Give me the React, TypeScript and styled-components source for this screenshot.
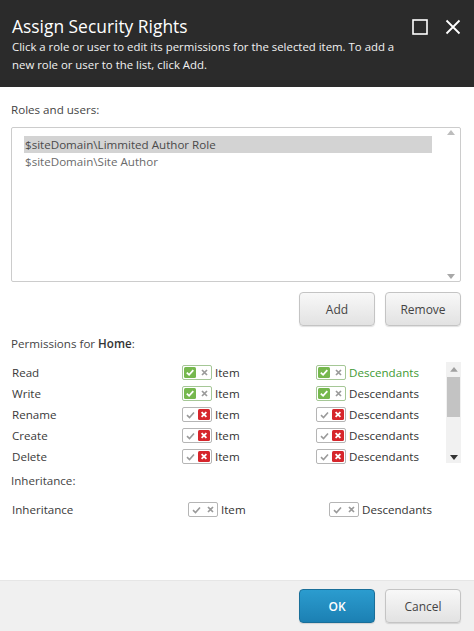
import { FunctionComponent } from "react";
import styled, { createGlobalStyle } from "styled-components";

const GlobalStyle = createGlobalStyle`
  html, body {
    margin: 0;
    padding: 0;
    background: #ffffff;
  }
  * {
    box-sizing: border-box;
  }
`;

const DialogRoot = styled.div`
  width: 474px;
  height: 631px;
  display: flex;
  flex-direction: column;
  font-family: "Open Sans", "Noto Sans", sans-serif;
  font-size: 11.6px;
  color: #333333;
  background: #ffffff;
  overflow: hidden;
`;

const Header = styled.header`
  height: 87px;
  flex-shrink: 0;
  background: #2b2b2b;
  color: #ffffff;
  padding: 14px 13px 0 12px;
  display: flex;
  flex-direction: column;
`;

const TitleRow = styled.div`
  display: flex;
  align-items: center;
  justify-content: space-between;
  height: 24px;
`;

const Title = styled.h1`
  margin: 0;
  font-size: 17.4px;
  font-weight: 400;
  line-height: 24px;
`;

const WindowButtons = styled.div`
  display: flex;
  align-items: center;
  gap: 17px;
  padding-top: 2px;
`;

const Description = styled.p`
  margin: 0;
  font-size: 11.4px;
  line-height: 18px;
  color: #f2f2f2;
  width: 400px;
`;

const Body = styled.main`
  flex: 1;
  display: flex;
  flex-direction: column;
  padding: 14px 13px 0 11px;
`;

const SectionLabel = styled.div`
  line-height: 18px;
  color: #444444;
  strong {
    font-weight: 600;
    color: #333333;
  }
`;

const ListBox = styled.div`
  margin-top: 8px;
  height: 155px;
  border: 1px solid #cccccc;
  border-radius: 2px;
  display: flex;
  padding: 8px 0 8px 12px;
`;

const ListItems = styled.ul`
  flex: 1;
  margin: 0;
  padding: 0;
  list-style: none;
`;

const ListItem = styled.li<{ $selected?: boolean }>`
  height: 17px;
  line-height: 17px;
  padding-left: 1px;
  color: ${(p) => (p.$selected ? "#4a4a4a" : "#6a6a6a")};
  background: ${(p) => (p.$selected ? "#d3d3d3" : "transparent")};
`;

const ListScroll = styled.div`
  width: 28px;
  margin-top: -6px;
  margin-bottom: -6px;
  display: flex;
  flex-direction: column;
  justify-content: space-between;
  align-items: center;
  padding-left: 9px;
`;

const ButtonRow = styled.div<{ $padTop: number }>`
  display: flex;
  justify-content: flex-end;
  gap: 10px;
  padding-top: ${(p) => p.$padTop}px;
`;

const Button = styled.button<{ $primary?: boolean }>`
  width: 76px;
  height: 34px;
  border-radius: 4px;
  font-family: "Open Sans", "Noto Sans", sans-serif;
  font-size: 12px;
  cursor: pointer;
  border: 1px solid ${(p) => (p.$primary ? "#1a6f99" : "#c4c4c4")};
  color: ${(p) => (p.$primary ? "#ffffff" : "#444444")};
  font-weight: ${(p) => (p.$primary ? 600 : 400)};
  background: ${(p) =>
    p.$primary
      ? "linear-gradient(#2b9ccf, #1c80b3)"
      : "linear-gradient(#f8f8f8, #e2e2e2)"};
  box-shadow: 0 1px 1px rgba(0, 0, 0, 0.12);
`;

const PermissionsHeading = styled(SectionLabel)`
  margin-top: 9px;
`;

const PermissionArea = styled.div`
  margin-top: 9px;
  height: 102px;
  display: flex;
  overflow: hidden;
`;

const PermissionRows = styled.div`
  flex: 1;
`;

const PermissionRow = styled.div<{ $columns: string }>`
  display: grid;
  grid-template-columns: ${(p) => p.$columns};
  align-items: center;
  height: 21px;
  line-height: 16px;
  padding-left: 1px;
`;

const RowLabel = styled.span`
  color: #3a3a3a;
`;

const Choice = styled.span<{ $highlight?: boolean }>`
  display: flex;
  align-items: center;
  gap: 3px;
  color: ${(p) => (p.$highlight ? "#3f9a34" : "#333333")};
`;

const Toggle = styled.span<{ $allow?: boolean }>`
  width: 30px;
  height: 15px;
  display: flex;
  border: 1px solid ${(p) => (p.$allow ? "#a5c796" : "#b5b5b5")};
  border-radius: 2px;
  background: #ffffff;
`;

const ToggleCell = styled.span`
  width: 14px;
  height: 13px;
  display: flex;
  align-items: center;
  justify-content: center;
`;

const ScrollTrack = styled.div`
  width: 15px;
  margin-bottom: 1px;
  background: #f1f1f1;
  display: flex;
  flex-direction: column;
  align-items: center;
  padding-top: 5px;
`;

const ScrollThumb = styled.div`
  width: 13px;
  height: 42px;
  margin-top: 5px;
  background: #c3c3c3;
`;

const ScrollArrowDown = styled.div`
  margin-top: 31px;
`;

const InheritanceHeading = styled(SectionLabel)`
  margin-top: 8px;
`;

const InheritanceRow = styled(PermissionRow)`
  margin-top: 9px;
`;

const Footer = styled.footer`
  height: 51px;
  flex-shrink: 0;
  background: #f0f0f0;
  border-top: 1px solid #e6e6e6;
  padding: 0 13px;
  display: flex;
  align-items: center;
  justify-content: flex-end;
  gap: 10px;
`;

const MaximizeIcon = () => (
  <svg width="16" height="16" viewBox="0 0 16 16">
    <rect x="1" y="1" width="14" height="14" fill="none" stroke="#ffffff" strokeWidth="1.6" />
  </svg>
);

const CloseIcon = () => (
  <svg width="16" height="16" viewBox="0 0 16 16">
    <path d="M1.5 1.5 L14.5 14.5 M14.5 1.5 L1.5 14.5" stroke="#ffffff" strokeWidth="1.8" />
  </svg>
);

const Arrow: FunctionComponent<{ up?: boolean; color: string }> = ({ up, color }) => (
  <svg width="8" height="5" viewBox="0 0 8 5">
    <path d={up ? "M0 5 L4 0 L8 5 Z" : "M0 0 L4 5 L8 0 Z"} fill={color} />
  </svg>
);

const SmallCheck = () => (
  <svg width="9" height="8" viewBox="0 0 9 8">
    <path d="M1 4.2 L3.5 6.5 L8 1.5" fill="none" stroke="#9a9a9a" strokeWidth="1.6" />
  </svg>
);

const SmallCross = () => (
  <svg width="7" height="7" viewBox="0 0 7 7">
    <path d="M1 1 L6 6 M6 1 L1 6" stroke="#9a9a9a" strokeWidth="1.7" />
  </svg>
);

const FilledCheck = () => (
  <svg width="12" height="11" viewBox="0 0 12 11">
    <rect x="0" y="0" width="12" height="11" rx="1.5" fill="#76b84e" />
    <path d="M2.8 5.6 L5.1 7.8 L9.3 3.2" fill="none" stroke="#ffffff" strokeWidth="1.8" />
  </svg>
);

const FilledCross = () => (
  <svg width="12" height="11" viewBox="0 0 12 11">
    <rect x="0" y="0" width="12" height="11" rx="1.5" fill="#d6262c" />
    <path d="M3.6 3.1 L8.4 7.9 M8.4 3.1 L3.6 7.9" stroke="#ffffff" strokeWidth="1.8" />
  </svg>
);

type Access = "allow" | "deny" | "none";

const AccessToggle: FunctionComponent<{ access: Access }> = ({ access }) => (
  <Toggle $allow={access === "allow"}>
    <ToggleCell>{access === "allow" ? <FilledCheck /> : <SmallCheck />}</ToggleCell>
    <ToggleCell>{access === "deny" ? <FilledCross /> : <SmallCross />}</ToggleCell>
  </Toggle>
);

type Permission = {
  name: string;
  item: Access;
  descendants: Access;
  highlight?: boolean;
};

const permissions: Permission[] = [
  { name: "Read", item: "allow", descendants: "allow", highlight: true },
  { name: "Write", item: "allow", descendants: "allow" },
  { name: "Rename", item: "deny", descendants: "deny" },
  { name: "Create", item: "deny", descendants: "deny" },
  { name: "Delete", item: "deny", descendants: "deny" },
];

const roles = ["$siteDomain\\Limmited Author Role", "$siteDomain\\Site Author"];

const App = () => {
  return (
    <>
      <GlobalStyle />
      <DialogRoot>
        <Header>
          <TitleRow>
            <Title>Assign Security Rights</Title>
            <WindowButtons>
              <MaximizeIcon />
              <CloseIcon />
            </WindowButtons>
          </TitleRow>
          <Description>
            Click a role or user to edit its permissions for the selected item. To add a new role
            or user to the list, click Add.
          </Description>
        </Header>

        <Body>
          <SectionLabel>Roles and users:</SectionLabel>
          <ListBox>
            <ListItems>
              {roles.map((role, i) => (
                <ListItem key={role} $selected={i === 0}>
                  {role}
                </ListItem>
              ))}
            </ListItems>
            <ListScroll>
              <Arrow up color="#bdbdbd" />
              <Arrow color="#a8a8a8" />
            </ListScroll>
          </ListBox>

          <ButtonRow $padTop={10}>
            <Button>Add</Button>
            <Button>Remove</Button>
          </ButtonRow>

          <PermissionsHeading>
            Permissions for <strong>Home</strong>:
          </PermissionsHeading>
          <PermissionArea>
            <PermissionRows>
              {permissions.map((perm) => (
                <PermissionRow key={perm.name} $columns="170px 134px 1fr">
                  <RowLabel>{perm.name}</RowLabel>
                  <Choice>
                    <AccessToggle access={perm.item} />
                    Item
                  </Choice>
                  <Choice $highlight={perm.highlight}>
                    <AccessToggle access={perm.descendants} />
                    Descendants
                  </Choice>
                </PermissionRow>
              ))}
            </PermissionRows>
            <ScrollTrack>
              <Arrow up color="#a0a0a0" />
              <ScrollThumb />
              <ScrollArrowDown>
                <Arrow color="#333333" />
              </ScrollArrowDown>
            </ScrollTrack>
          </PermissionArea>

          <InheritanceHeading>Inheritance:</InheritanceHeading>
          <InheritanceRow $columns="176px 141px 1fr">
            <RowLabel>Inheritance</RowLabel>
            <Choice>
              <AccessToggle access="none" />
              Item
            </Choice>
            <Choice>
              <AccessToggle access="none" />
              Descendants
            </Choice>
          </InheritanceRow>
        </Body>

        <Footer>
          <Button $primary>OK</Button>
          <Button>Cancel</Button>
        </Footer>
      </DialogRoot>
    </>
  );
};

export default App;
